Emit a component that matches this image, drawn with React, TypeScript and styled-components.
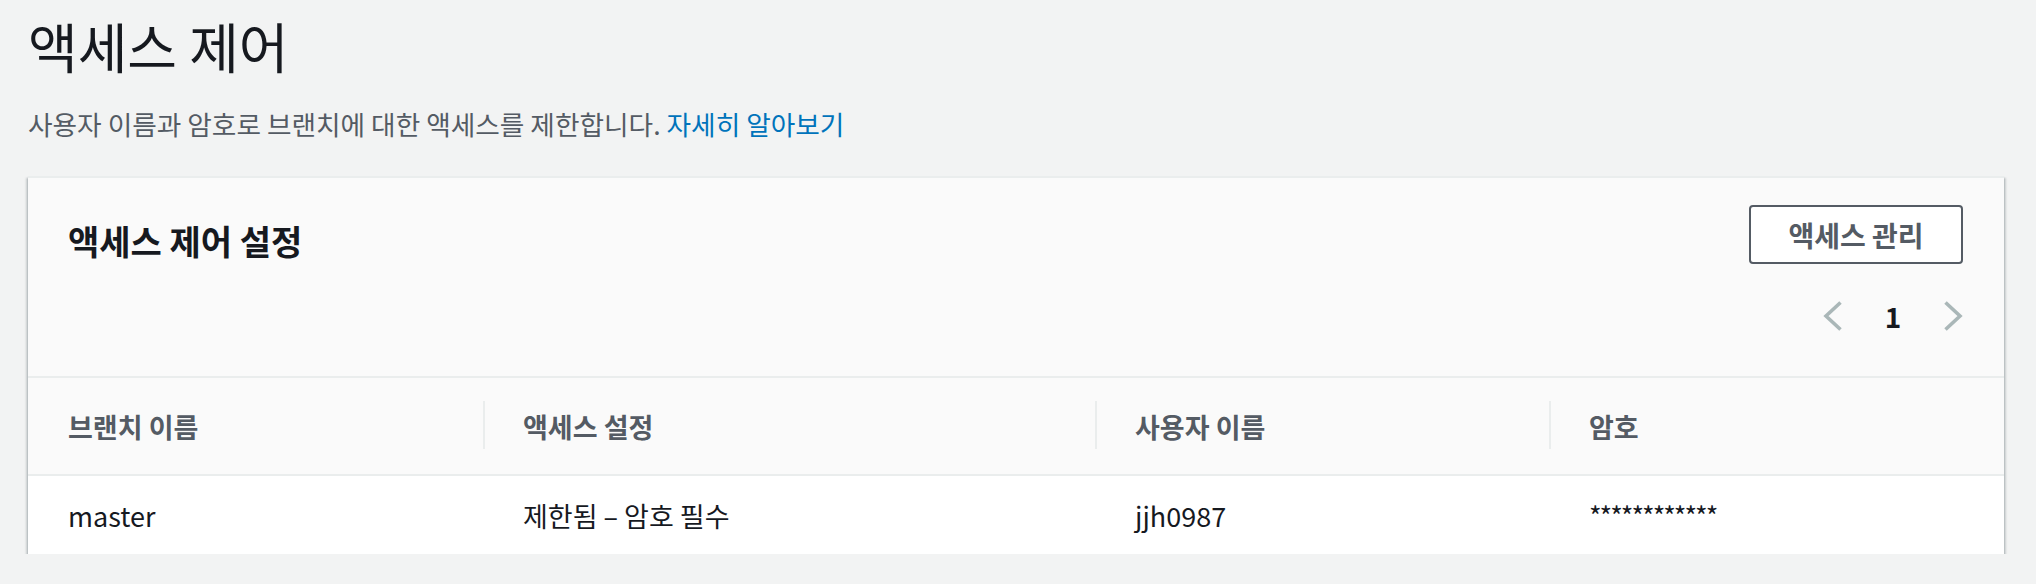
import React from "react";
import styled, { createGlobalStyle } from "styled-components";

const GlobalStyle = createGlobalStyle`
  html, body {
    margin: 0;
    padding: 0;
    background: #f2f3f3;
  }
  body {
    font-family: "Noto Sans CJK KR", "Noto Sans", sans-serif;
    color: #16191f;
  }
`;

const Page = styled.div`
  padding: 11px 32px 0 28px;
  width: 2036px;
  box-sizing: border-box;
`;

const Title = styled.h1`
  margin: 0;
  font-size: 54px;
  line-height: 70px;
  font-weight: 400;
  color: #16191f;
`;

const Description = styled.p`
  margin: 25px 0 0;
  font-size: 26.7px;
  line-height: 36px;
  color: #545b64;
`;

const Link = styled.a`
  color: #0073bb;
  text-decoration: none;
`;

const Card = styled.section`
  margin-top: 34px;
  background: #fafafa;
  border-top: 2px solid #eaeded;
  box-shadow: 0 2px 2px 0 rgba(0, 28, 36, 0.3),
    2px 2px 2px 0 rgba(0, 28, 36, 0.15),
    -2px 2px 2px 0 rgba(0, 28, 36, 0.15);
`;

const CardHeader = styled.div`
  display: flex;
  justify-content: space-between;
  align-items: flex-start;
  height: 198px;
  box-sizing: border-box;
  padding: 27px 41px 0 40px;
`;

const CardTitle = styled.h2`
  margin: 12px 0 0;
  font-size: 34px;
  line-height: 48px;
  font-weight: 700;
  color: #16191f;
`;

const Actions = styled.div`
  display: flex;
  flex-direction: column;
  align-items: flex-end;
`;

const Button = styled.button`
  width: 214px;
  height: 59px;
  border: 2px solid #545b64;
  border-radius: 4px;
  background: #ffffff;
  color: #545b64;
  font-family: inherit;
  font-size: 28px;
  font-weight: 700;
  padding: 0;
  cursor: pointer;
`;

const Pagination = styled.div`
  display: flex;
  align-items: center;
  margin-top: 37px;
`;

const PageArrow = styled.span`
  display: flex;
  width: 20px;
  height: 30px;
  align-items: center;
  justify-content: center;
`;

const PageNumber = styled.span`
  width: 100px;
  text-align: center;
  font-size: 28px;
  font-weight: 700;
  line-height: 30px;
  color: #16191f;
`;

const Grid = styled.div`
  display: grid;
  grid-template-columns: 455px 612px 454px 1fr;
`;

const HeaderCell = styled.div<{ $divider?: boolean }>`
  position: relative;
  height: 96px;
  border-top: 2px solid #eaeded;
  display: flex;
  align-items: center;
  padding-left: 40px;
  font-size: 27px;
  font-weight: 700;
  color: #545b64;
  background: #fafafa;
  &::before {
    content: "";
    display: ${(p) => (p.$divider ? "block" : "none")};
    position: absolute;
    left: 0;
    top: 23px;
    width: 2px;
    height: 48px;
    background: #eaeded;
  }
`;

const BodyCell = styled.div<{ $masked?: boolean }>`
  height: 78px;
  border-top: 2px solid #eaeded;
  display: flex;
  align-items: center;
  padding-left: 40px;
  font-size: 27px;
  letter-spacing: ${(p) => (p.$masked ? "-2px" : "0")};
  color: #16191f;
  background: #ffffff;
`;

const Chevron = ({ dir }: { dir: "left" | "right" }) => (
  <svg width="20" height="30" viewBox="0 0 20 30" fill="none">
    <path
      d={dir === "left" ? "M17.5 1.5 L3 15 L17.5 28.5" : "M2.5 1.5 L17 15 L2.5 28.5"}
      stroke="#aab7b8"
      strokeWidth="3.6"
    />
  </svg>
);

const headers = ["브랜치 이름", "액세스 설정", "사용자 이름", "암호"];
const row = ["master", "제한됨 – 암호 필수", "jjh0987", "************"];

export default function App() {
  return (
    <>
      <GlobalStyle />
      <Page>
        <Title>액세스 제어</Title>
        <Description>
          사용자 이름과 암호로 브랜치에 대한 액세스를 제한합니다.{" "}
          <Link href="#">자세히 알아보기</Link>
        </Description>
        <Card>
          <CardHeader>
            <CardTitle>액세스 제어 설정</CardTitle>
            <Actions>
              <Button>액세스 관리</Button>
              <Pagination>
                <PageArrow>
                  <Chevron dir="left" />
                </PageArrow>
                <PageNumber>1</PageNumber>
                <PageArrow>
                  <Chevron dir="right" />
                </PageArrow>
              </Pagination>
            </Actions>
          </CardHeader>
          <Grid>
            {headers.map((h, i) => (
              <HeaderCell key={h} $divider={i > 0}>
                {h}
              </HeaderCell>
            ))}
            {row.map((c, i) => (
              <BodyCell key={c} $masked={i === 3}>
                {c}
              </BodyCell>
            ))}
          </Grid>
        </Card>
      </Page>
    </>
  );
}
